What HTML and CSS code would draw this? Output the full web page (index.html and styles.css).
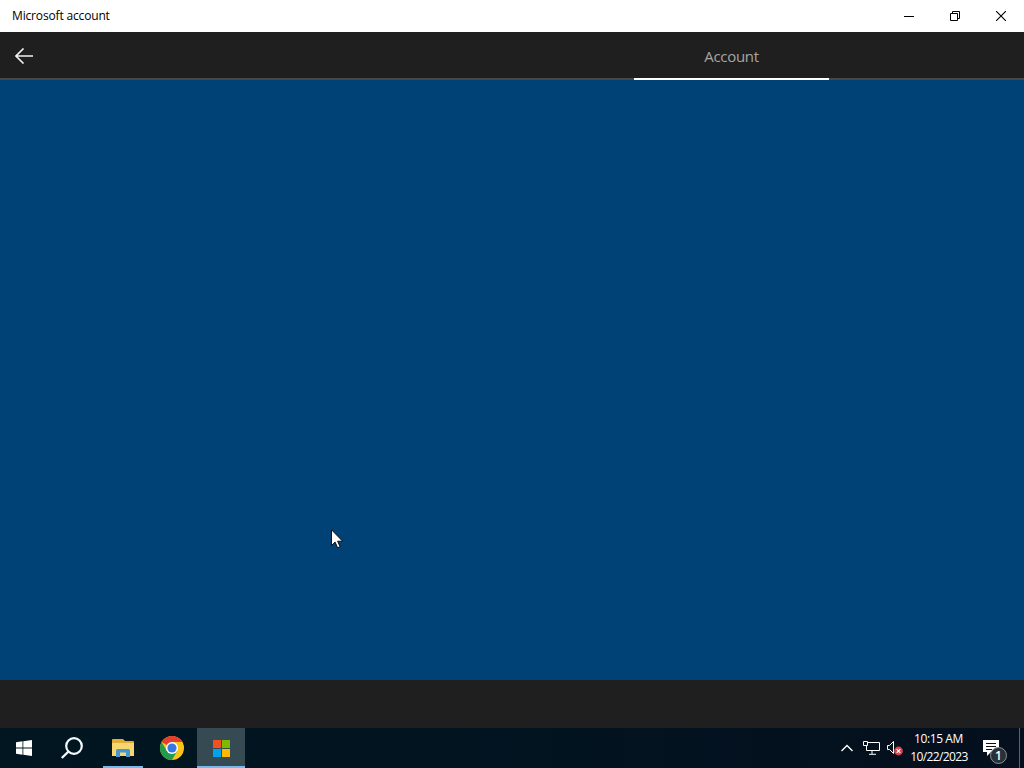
FILE: index.html
```html
<!DOCTYPE html>
<html lang="en">
<head>
    <meta charset="UTF-8">
    <title>Microsoft account</title>
    <link rel="stylesheet" href="styles.css">
</head>
<body>
    <div class="titlebar">
        <span class="title">Microsoft account</span>
        <div class="window-buttons">
            <div class="window-button">
                <svg width="10" height="10"><path d="M0 5.500h10" stroke="#000" fill="none"/></svg>
            </div>
            <div class="window-button">
                <svg width="10" height="10"><path d="M.5 2.500h7v7h-7zM2.500 2.500v-2h7v7h-2" stroke="#000" fill="none"/></svg>
            </div>
            <div class="window-button">
                <svg width="10" height="10"><path d="M0 0l10 10M10 0L0 10" stroke="#000" stroke-width="1.100" fill="none"/></svg>
            </div>
        </div>
    </div>

    <div class="navbar">
        <div class="back">
            <svg width="18" height="16"><path d="M8.500 0.500L1 8l7.500 7.500M1 8h17" stroke="#f2f2f2" stroke-width="1.600" fill="none"/></svg>
        </div>
        <div class="tab">Account</div>
    </div>

    <div class="content">
        <svg class="cursor" width="13" height="20" viewBox="0 0 13 20"><path d="M.5.8v15.700l3.600-3.400 2.500 5.700 2.500-1.100-2.500-5.500h5z" fill="#fff" stroke="#000" stroke-width=".9"/></svg>
    </div>
    <div class="footer"></div>

    <div class="taskbar">
        <div class="task">
            <svg width="16" height="16" viewBox="0 0 16 16"><path d="M0 2.200l6.500-.9v6.300H0zM7.300 1.200L16 0v7.600H7.300zM0 8.400h6.500v6.300L0 13.800zM7.300 8.400H16V16l-8.700-1.200z" fill="#fff"/></svg>
        </div>
        <div class="task">
            <svg width="24" height="24" viewBox="0 0 24 24"><circle cx="14" cy="10" r="7.800" fill="none" stroke="#f4fafc" stroke-width="2.200"/><path d="M8.500 15.500L1.800 22" stroke="#f4fafc" stroke-width="2.400"/></svg>
        </div>
        <div class="task open explorer">
            <svg width="22" height="20" viewBox="0 0 22 20">
                <path d="M0 2q0-1 1-1h10l2 2h8q1 0 1 1v14H0z" fill="#e5ac35"/>
                <path d="M0 5h22v13H0z" fill="#f8d66f"/>
                <path d="M4 12.500q0-1.500 1.500-1.500h11q1.500 0 1.500 1.500V19h-4v-4.500H8V19H4z" fill="#4598cf"/>
            </svg>
        </div>
        <div class="task">
            <svg width="24" height="24" viewBox="0 0 24 24">
                <circle cx="12" cy="12" r="12" fill="#fbc316"/>
                <path d="M12 12L1.600 6A12 12 0 0 1 22.400 6H12z" fill="#e33e31"/>
                <path d="M1.600 6A12 12 0 0 0 12 24l5.200-9L12 12 6.800 15z" fill="#229b4e"/>
                <circle cx="12" cy="12" r="6" fill="#fff"/>
                <circle cx="12" cy="12" r="4.600" fill="#3478e5"/>
            </svg>
        </div>
        <div class="task open active">
            <svg width="17" height="17" viewBox="0 0 17 17"><path d="M0 0h8v8H0z" fill="#f05022"/><path d="M9 0h8v8H9z" fill="#7db901"/><path d="M0 9h8v8H0z" fill="#00a3ee"/><path d="M9 9h8v8H9z" fill="#fdb900"/></svg>
        </div>

        <div class="tray">
            <svg width="12" height="8" viewBox="0 0 12 8"><path d="M.5 7L6 1.500 11.500 7" fill="none" stroke="#fff" stroke-width="1.400"/></svg>
            <svg width="17" height="14" viewBox="0 0 17 14"><path d="M5 1.500h11.500v8H3.500V5M9 9.500v3.500M6 13.300h7M.5.500h4v4h-4z" fill="none" stroke="#fff"/></svg>
            <svg width="16" height="16" viewBox="0 0 16 16"><path d="M.5 5.500h2l4-4v12l-4-4h-2z" fill="none" stroke="#fff"/><circle cx="11.500" cy="11" r="4.400" fill="#d9434b"/><path d="M9.700 9.200l3.600 3.600M13.300 9.200l-3.600 3.600" stroke="#fff" stroke-width="1.200"/></svg>
            <div class="clock">
                <div class="time">10:15 AM</div>
                <div class="date">10/22/2023</div>
            </div>
            <div class="notifications">
                <svg width="16" height="16" viewBox="0 0 16 16"><path d="M0 0h16v12H8l-4 4v-4H0z" fill="#fff"/><path d="M3 3.500h10M3 6.500h10M3 9.500h6" stroke="#07101d"/></svg>
                <span class="badge">1</span>
            </div>
            <div class="show-desktop"></div>
        </div>
    </div>
</body>
</html>
```
FILE: styles.css
```css
body {
    margin: 0;
    width: 1024px;
    height: 768px;
    display: flex;
    flex-direction: column;
    overflow: hidden;
    font-family: "Open Sans", "Noto Sans", sans-serif;
    font-size: 12px;
}
svg {
    display: block;
    flex: none;
}
.titlebar {
    height: 32px;
    display: flex;
    align-items: center;
    justify-content: space-between;
    background-color: #fff;
    color: #000;
}
.title {
    padding-left: 12px;
    padding-bottom: 2px;
    font-size: 12px;
    letter-spacing: -0.16px;
}
.window-buttons {
    display: flex;
}
.window-button {
    width: 46px;
    height: 32px;
    display: flex;
    align-items: center;
    justify-content: center;
}
.navbar {
    height: 48px;
    box-sizing: border-box;
    display: flex;
    justify-content: space-between;
    background-color: #1f1f1f;
    box-shadow: inset 0 -2px #484848;
}
.back {
    width: 48px;
    display: flex;
    align-items: center;
    justify-content: center;
}
.tab {
    width: 195px;
    box-sizing: border-box;
    margin-right: 195px;
    border-bottom: 2px solid #fff;
    line-height: 49px;
    text-align: center;
    font-size: 15px;
    letter-spacing: -0.3px;
    color: #a6a6a6;
}
.content {
    height: 600px;
    position: relative;
    background-color: #004275;
}
.cursor {
    position: absolute;
    left: 331px;
    top: 449px;
}
.footer {
    height: 48px;
    background-color: #1f1f1f;
}
.taskbar {
    height: 40px;
    display: flex;
    background: linear-gradient(to right, #011620, #011420 45%, #050f1e);
}
.task {
    width: 48px;
    margin-right: 1px;
    box-sizing: border-box;
    display: flex;
    align-items: center;
    justify-content: center;
}
.task:first-child {
    margin-right: 0;
}
.open {
    border-bottom: 2px solid #76b9ed;
    padding-top: 2px;
}
.explorer {
    width: 40px;
    margin-left: 6px;
    margin-right: 5px;
}
.active {
    background-color: #354a53;
}
.tray {
    margin-left: auto;
    display: flex;
    align-items: center;
    color: #fff;
}
.tray > svg {
    margin-right: 10px;
}
.tray > svg:nth-of-type(2) {
    margin-right: 7px;
}
.tray > svg:nth-of-type(3) {
    margin-right: 7px;
}
.clock {
    width: 58px;
    line-height: 18px;
    text-align: center;
    white-space: nowrap;
}
.time {
    letter-spacing: -0.4px;
    margin-right: 1px;
}
.date {
    letter-spacing: -0.6px;
}
.notifications {
    position: relative;
    margin-left: 15px;
    margin-right: 20px;
}
.badge {
    position: absolute;
    left: 7px;
    top: 7px;
    width: 15px;
    height: 15px;
    border: 1px solid #8b9097;
    border-radius: 50%;
    background-color: #28303a;
    font-size: 12px;
    font-weight: 600;
    line-height: 15px;
    text-align: center;
}
.show-desktop {
    width: 4px;
    height: 40px;
    border-left: 1px solid #5d646e;
}
```
